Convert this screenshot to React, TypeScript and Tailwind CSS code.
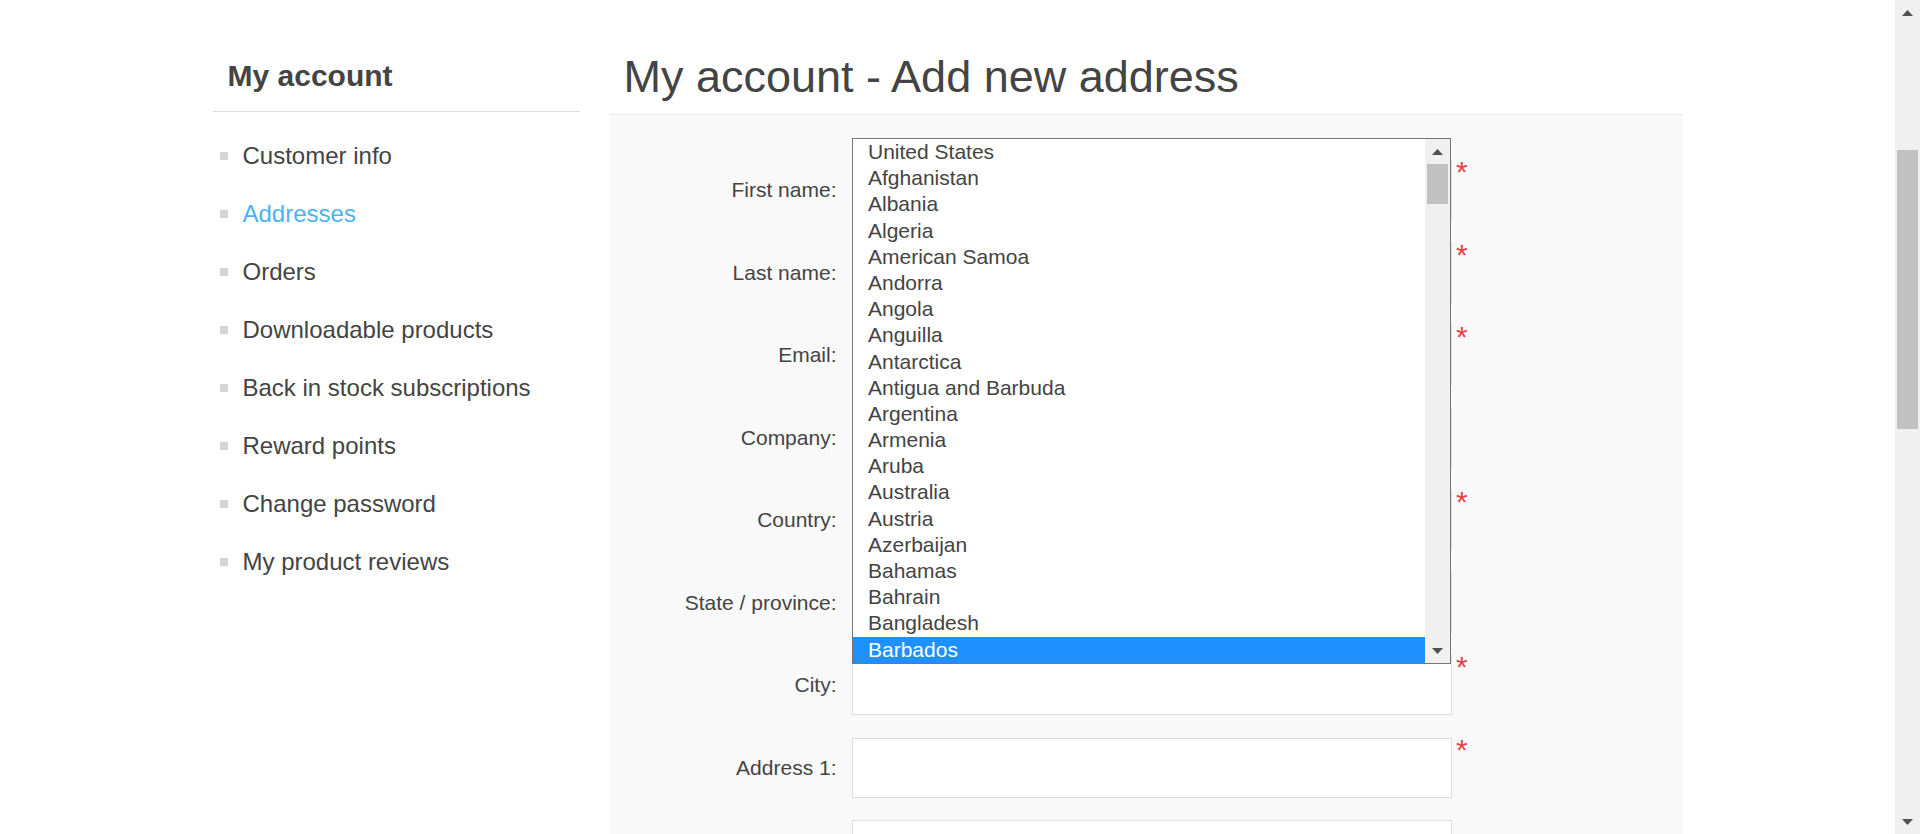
import React from "react";

const countries = [
  "United States",
  "Afghanistan",
  "Albania",
  "Algeria",
  "American Samoa",
  "Andorra",
  "Angola",
  "Anguilla",
  "Antarctica",
  "Antigua and Barbuda",
  "Argentina",
  "Armenia",
  "Aruba",
  "Australia",
  "Austria",
  "Azerbaijan",
  "Bahamas",
  "Bahrain",
  "Bangladesh",
  "Barbados",
];

const sideItems = [
  "Customer info",
  "Addresses",
  "Orders",
  "Downloadable products",
  "Back in stock subscriptions",
  "Reward points",
  "Change password",
  "My product reviews",
];

const fields: { label: string; required: boolean }[] = [
  { label: "First name:", required: true },
  { label: "Last name:", required: true },
  { label: "Email:", required: true },
  { label: "Company:", required: false },
  { label: "Country:", required: true },
  { label: "State / province:", required: false },
  { label: "City:", required: true },
  { label: "Address 1:", required: true },
  { label: "", required: false },
];

function Arrow({ down = false }: { down?: boolean }) {
  return (
    <svg width="11" height="6" viewBox="0 0 11 6" className="block">
      {down ? (
        <polygon points="0,0 11,0 5.5,6" fill="#505050" />
      ) : (
        <polygon points="0,6 5.5,0 11,6" fill="#505050" />
      )}
    </svg>
  );
}

export default function App() {
  return (
    <div className="flex h-[834px] w-[1920px] overflow-hidden bg-white font-['Liberation_Sans',Arial,sans-serif]">
      <div className="flex-1 overflow-hidden">
        <div className="mx-auto flex w-[1470px] justify-between">
          {/* Sidebar */}
          <aside className="w-[367.5px] shrink-0">
            <div className="border-b border-[#dddddd] pb-[20px] pl-[15px] pt-[61px] text-[30px] font-bold leading-[30px] text-[#444444]">
              My account
            </div>
            <ul className="pt-[15px]">
              {sideItems.map((item) => (
                <li key={item} className="flex h-[58px] items-center">
                  <span className="ml-[7.5px] h-[8px] w-[8px] shrink-0 bg-[#d4d4d4]" />
                  <span
                    className={
                      item === "Addresses"
                        ? "ml-[14.5px] text-[24px] text-[#4ab2f1]"
                        : "ml-[14.5px] text-[24px] text-[#444444]"
                    }
                  >
                    {item}
                  </span>
                </li>
              ))}
            </ul>
          </aside>

          {/* Main */}
          <main className="w-[1073px] shrink-0">
            <h1 className="pb-[15px] pl-[14px] pt-[54px] text-[45px] font-normal leading-[45px] text-[#444444]">
              My account - Add new address
            </h1>
            <div className="relative h-[800px] border-t border-[#e9e9e9] bg-[#f9f9f9] pt-[45px]">
              {fields.map((f, i) => (
                <div key={i} className="mb-[22.5px] flex h-[60px] items-center">
                  <div className="w-[227px] shrink-0 text-right text-[21px] text-[#444444]">
                    {f.label}
                  </div>
                  <div className="ml-[15px] h-[60px] w-[600px] shrink-0 border border-[#dddddd] bg-white" />
                  {f.required && (
                    <span className="ml-[4.5px] self-start text-[30px] leading-[24px] text-[#e4434b]">
                      *
                    </span>
                  )}
                </div>
              ))}

              {/* Opened country listbox */}
              <div className="absolute left-[242.5px] top-[23px] flex h-[526px] w-[599px] border border-[#767676] bg-white">
                <div className="flex-1">
                  {countries.map((c) => (
                    <div
                      key={c}
                      className={
                        c === "Barbados"
                          ? "h-[26.2px] bg-[#1e90ff] pl-[15px] text-[21px] leading-[26.2px] text-white"
                          : "h-[26.2px] pl-[15px] text-[21px] leading-[26.2px] text-[#444444]"
                      }
                    >
                      {c}
                    </div>
                  ))}
                </div>
                <div className="flex w-[25px] flex-col bg-[#f0f0f0]">
                  <div className="flex h-[25px] items-center justify-center">
                    <Arrow />
                  </div>
                  <div className="flex-1">
                    <div className="mx-[2px] h-[40px] bg-[#c1c1c1]" />
                  </div>
                  <div className="flex h-[25px] items-center justify-center">
                    <Arrow down />
                  </div>
                </div>
              </div>
            </div>
          </main>
        </div>
      </div>

      {/* Page scrollbar */}
      <div className="flex h-[834px] w-[25px] shrink-0 flex-col bg-[#f0f0f0]">
        <div className="flex h-[25px] items-center justify-center">
          <Arrow />
        </div>
        <div className="flex-1">
          <div className="mx-[2px] mt-[125px] h-[279px] bg-[#c1c1c1]" />
        </div>
        <div className="flex h-[25px] items-center justify-center">
          <Arrow down />
        </div>
      </div>
    </div>
  );
}
